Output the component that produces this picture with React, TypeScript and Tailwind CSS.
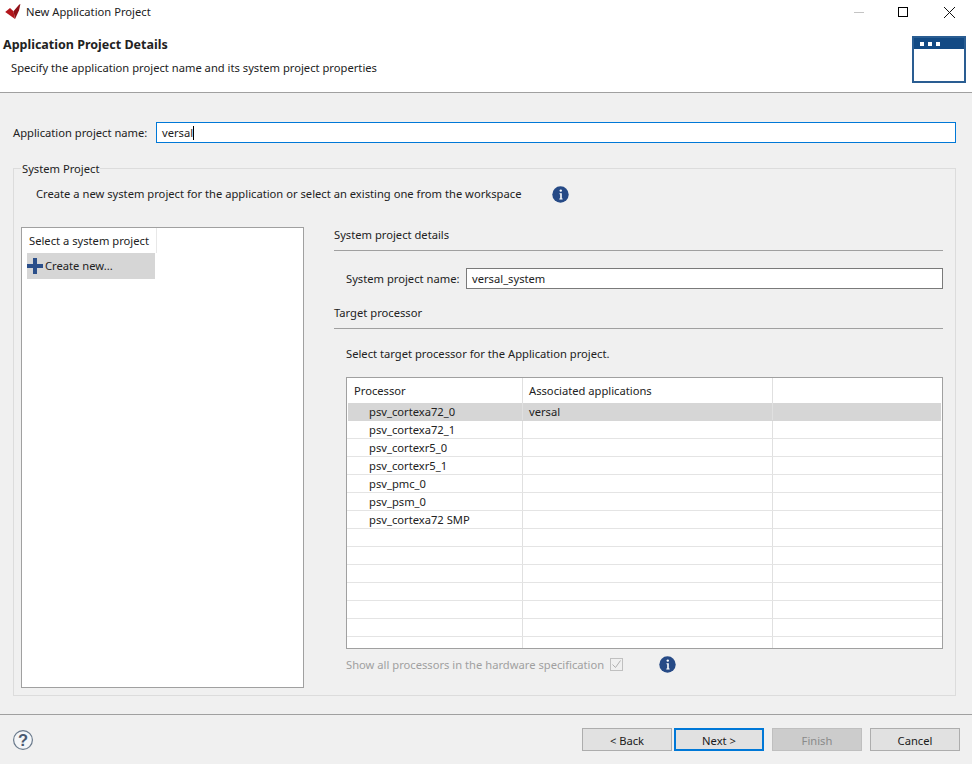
import React from 'react';

const rows = [
  'psv_cortexa72_0',
  'psv_cortexa72_1',
  'psv_cortexr5_0',
  'psv_cortexr5_1',
  'psv_pmc_0',
  'psv_psm_0',
  'psv_cortexa72 SMP',
  '', '', '', '', '', '',
];

function InfoIcon() {
  return (
    <svg width="17" height="17" viewBox="0 0 17 17">
      <circle cx="8.5" cy="8.5" r="8.2" fill="#264a86" />
      <circle cx="8.8" cy="4.6" r="1.2" fill="#fff" />
      <path d="M7.5 7.2h2.3v5.2h.8v1H7.3v-1h.9V8.2h-.7z" fill="#fff" />
    </svg>
  );
}

function Logo() {
  return (
    <svg width="18" height="16" viewBox="0 0 18 16">
      <path d="M1.2 8L6 4 9.5 7.2 11 15z" fill="#b3161c" />
      <path d="M9.5 7.2L15 .8 16.4 0 15 6.5 11 15z" fill="#8f0f16" />
    </svg>
  );
}

function WizardIcon() {
  return (
    <div className="w-[54px] h-[47px] border-2 border-[#2a5d92] bg-white">
      <div className="h-[11px] bg-[#134a84] flex items-center gap-[4px] pl-[6px]">
        <div className="w-[4px] h-[4px] bg-white" />
        <div className="w-[4px] h-[4px] bg-white" />
        <div className="w-[4px] h-[4px] bg-white" />
      </div>
    </div>
  );
}

function Button({ label, variant }: { label: string; variant?: 'focus' | 'disabled' }) {
  let cls = 'bg-[#e1e1e1] border border-[#adadad] text-[#1a1a1a]';
  if (variant === 'focus') cls = 'bg-[#e1e1e1] border-2 border-[#0078d7] text-[#1a1a1a]';
  if (variant === 'disabled') cls = 'bg-[#cccccc] border border-[#bfbfbf] text-[#8a8a8a]';
  return <div className={`w-[90px] h-[23px] flex items-center justify-center pt-[4px] ${cls}`}>{label}</div>;
}

export default function App() {
  return (
    <div className="w-[972px] h-[764px] flex flex-col bg-[#f0f0f0] text-[11.2px] text-[#222] overflow-hidden font-['Noto_Sans',sans-serif]">
      <div className="h-[24px] bg-white flex items-center shrink-0">
        <div className="ml-[4px] mr-[4px] flex"><Logo /></div>
        <span>New Application Project</span>
        <div className="ml-auto flex items-center">
          <div className="w-[10px] h-px bg-[#c4c4c4] mr-[34px]" />
          <div className="w-[10px] h-[10px] border border-black mr-[35px]" />
          <svg width="13" height="13" viewBox="0 0 13 13" className="mr-[16px]">
            <path d="M1 1l11 11M12 1L1 12" stroke="#111" strokeWidth="1" />
          </svg>
        </div>
      </div>

      <div className="h-[69px] bg-white border-b border-[#a0a0a0] flex shrink-0">
        <div className="flex-1 pl-[3px] pt-[12px]">
          <div className="font-bold text-[12.5px] leading-[18px]">Application Project Details</div>
          <div className="pl-[8px] mt-[5px] leading-[18px]">Specify the application project name and its system project properties</div>
        </div>
        <div className="mr-[6px] mt-[12px]"><WizardIcon /></div>
      </div>

      <div className="flex-1 flex flex-col px-[13px] pr-[16px] pt-[29px]">
        <div className="flex items-center h-[21px]">
          <span className="w-[143px] pt-px">Application project name:</span>
          <div className="flex-1 h-[21px] bg-white border border-[#0078d7] flex items-center pl-[5px]">
            <span className="pt-px">versal</span>
            <span className="w-px h-[14px] bg-black" />
          </div>
        </div>

        <div className="relative mt-[25px] h-[528px] border border-[#dcdcdc] pl-[7px] pr-[12px]">
          <span className="absolute left-[7px] top-[-9px] leading-[18px] bg-[#f0f0f0] px-px">System Project</span>
          <div className="flex items-center h-[18px] mt-[16px] pl-[15px]">
            <span className="w-[516px]">Create a new system project for the application or select an existing one from the workspace</span>
            <InfoIcon />
          </div>

          <div className="flex mt-[24px] gap-[30px]">
            <div className="w-[283px] h-[461px] bg-white border border-[#a0a0a0] shrink-0">
              <div className="w-[135px] h-[25px] border-r border-[#e8e8e8] flex items-center pl-[7px] pt-[2px]">Select a system project</div>
              <div className="ml-[5px] w-[128px] h-[26px] bg-[#d6d6d6] flex items-center">
                <svg width="16" height="16" viewBox="0 0 16 16" className="mr-[2px]">
                  <path d="M6 0h4v6h6v4h-6v6H6v-6H0V6h6z" fill="#2b4f8a" />
                </svg>
                <span>Create new...</span>
              </div>
            </div>

            <div className="flex-1 flex flex-col">
              <div className="leading-[18px] -mt-[1px]">System project details</div>
              <div className="h-px bg-[#a0a0a0] mt-[6px]" />
              <div className="flex items-center h-[21px] mt-[17px] pl-[12px]">
                <span className="w-[120px] pt-px">System project name:</span>
                <div className="flex-1 h-[21px] bg-white border border-[#7a7a7a] flex items-center pl-[5px] pt-px">versal_system</div>
              </div>
              <div className="leading-[18px] mt-[15px]">Target processor</div>
              <div className="h-px bg-[#a0a0a0] mt-[6px]" />
              <div className="leading-[18px] mt-[16px] pl-[12px]">Select target processor for the Application project.</div>

              <div className="ml-[12px] mt-[14px] h-[272px] bg-white border border-[#a0a0a0] overflow-hidden">
                <div className="h-[25px] flex items-center">
                  <div className="w-[176px] h-full flex items-center pl-[7px] pt-[2px] border-r border-[#e0e0e0]">Processor</div>
                  <div className="w-[250px] h-full flex items-center pl-[6px] pt-[2px] border-r border-[#e0e0e0]">Associated applications</div>
                </div>
                {rows.map((r, i) => (
                  <div key={i} className={`h-[18px] flex border-b ${i === 0 ? 'bg-[#d6d6d6] border-[#d6d6d6] ml-[1px] mr-[1px]' : 'border-[#e4e4e4]'}`}>
                    <div className={`${i === 0 ? 'w-[175px] pl-[21px]' : 'w-[176px] pl-[22px]'} flex items-center pt-[2px] border-r border-[#e0e0e0]`}>{r}</div>
                    <div className="w-[250px] flex items-center pl-[6px] pt-[2px] border-r border-[#e0e0e0]">{i === 0 ? 'versal' : ''}</div>
                  </div>
                ))}
                <div className="h-[12px] flex">
                  <div className="w-[176px] border-r border-[#e0e0e0]" />
                  <div className="w-[250px] border-r border-[#e0e0e0]" />
                </div>
              </div>

              <div className="flex items-center ml-[12px] mt-[7px] h-[17px] text-[#a0a0a0]">
                <span className="w-[264px] pt-[2px]">Show all processors in the hardware specification</span>
                <div className="w-[13px] h-[13px] border border-[#c0c0c0] flex items-center justify-center">
                  <svg width="11" height="11" viewBox="0 0 11 11">
                    <path d="M1.5 5.5l3 3 5-7" stroke="#b0b0b0" strokeWidth="1" fill="none" />
                  </svg>
                </div>
                <div className="ml-[36px] flex"><InfoIcon /></div>
              </div>
            </div>
          </div>
        </div>
      </div>

      <div className="h-[50px] border-t border-[#a0a0a0] flex items-center shrink-0 pl-[13px] pr-[12px]">
        <svg width="20" height="20" viewBox="0 0 20 20">
          <circle cx="10" cy="10" r="9.4" fill="#f4f6f8" stroke="#6a7a8c" strokeWidth="1.2" />
          <text x="10" y="16" textAnchor="middle" fontSize="16.5" fontWeight="700" fill="#4a5a70" fontFamily="Liberation Sans, sans-serif">?</text>
        </svg>
        <div className="ml-auto flex">
          <Button label="< Back" />
          <div className="ml-[2px]"><Button label="Next >" variant="focus" /></div>
          <div className="ml-[8px]"><Button label="Finish" variant="disabled" /></div>
          <div className="ml-[8px]"><Button label="Cancel" /></div>
        </div>
      </div>
    </div>
  );
}
